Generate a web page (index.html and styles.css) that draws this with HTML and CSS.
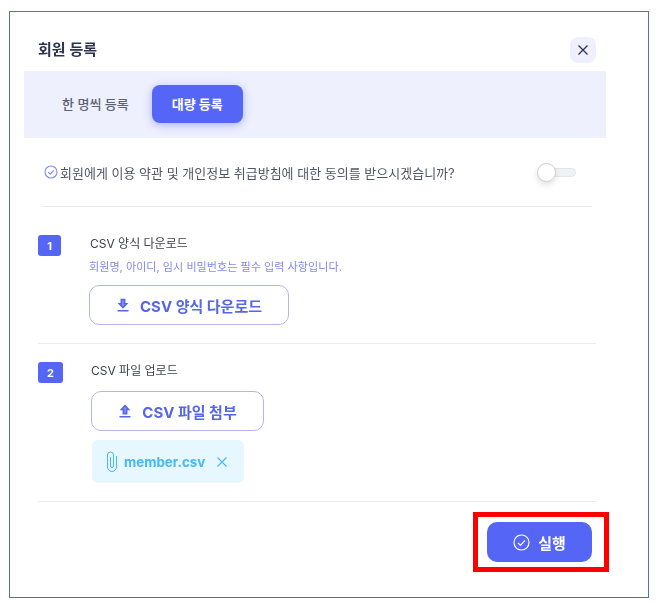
FILE: index.html
```html
<!DOCTYPE html>
<html lang="ko">
<head>
<meta charset="utf-8">
<title>회원 등록</title>
<link rel="stylesheet" href="styles.css">
</head>
<body>
<div class="frame">
  <header class="head">
    <h1 class="title">회원 등록</h1>
    <button class="close" aria-label="닫기">
      <svg width="12" height="12" viewBox="0 0 12 12"><path d="M1.500 1.500l9 9M10.500 1.500l-9 9" stroke="#2c3350" stroke-width="1.300" fill="none"/></svg>
    </button>
  </header>
  <nav class="tabs">
    <span class="tab">한 명씩 등록</span>
    <span class="tab-active">대량 등록</span>
  </nav>
  <div class="consent">
    <span class="consent-label">
      <svg class="consent-icon" width="14" height="14" viewBox="0 0 14 14"><circle cx="7" cy="7" r="6" fill="none" stroke="#7f8cf5" stroke-width="1.100"/><path d="M4.200 7.200l2 2 3.600-3.900" fill="none" stroke="#7f8cf5" stroke-width="1.100"/></svg>
      회원에게 이용 약관 및 개인정보 취급방침에 대한 동의를 받으시겠습니까?
    </span>
    <span class="switch"><span class="knob"></span></span>
  </div>
  <section class="step step-one">
    <span class="badge badge-one">1</span>
    <div class="step-body">
      <div class="step-title">CSV 양식 다운로드</div>
      <div class="step-note">회원명, 아이디, 임시 비밀번호는 필수 입력 사항입니다.</div>
      <button class="outline outline-one">
        <svg width="14" height="14" viewBox="0 0 14 14"><path d="M5.300 1.500h3.400v4.200h2L7 9.700 3.300 5.700h2zM1.500 12.700h11" fill="#7e8bf3" stroke="#5566e6" stroke-width="1.500"/></svg>
        CSV 양식 다운로드
      </button>
    </div>
  </section>
  <section class="step step-two">
    <span class="badge badge-two">2</span>
    <div class="step-body">
      <div class="step-title">CSV 파일 업로드</div>
      <button class="outline outline-two">
        <svg width="14" height="14" viewBox="0 0 14 14"><path d="M5.300 9.700V5.500h-2L7 1.500l3.700 4h-2v4.200zM1.500 12.700h11" fill="#7e8bf3" stroke="#5566e6" stroke-width="1.500"/></svg>
        CSV 파일 첨부
      </button>
      <div class="file">
        <svg width="12" height="21" viewBox="0 0 12 21"><path d="M10.500 5v11a4.500 4.500 0 0 1-9 0V4a3 3 0 0 1 6 0v11a1.500 1.500 0 0 1-3 0V6" fill="none" stroke="#45b8f5" stroke-width="1"/></svg>
        <span class="file-name">member.csv</span>
        <svg class="file-x" width="10" height="10" viewBox="0 0 10 10"><path d="M.5.500l9 9M9.500.500l-9 9" stroke="#45b8f5" stroke-width="1.100" fill="none"/></svg>
      </div>
    </div>
  </section>
  <footer class="foot">
    <div class="highlight">
      <button class="run">
        <svg width="17" height="17" viewBox="0 0 17 17"><circle cx="8.500" cy="8.500" r="7.500" fill="none" stroke="#fff" stroke-width="1.200"/><path d="M5 8.800l2.500 2.500 4.500-5" fill="none" stroke="#fff" stroke-width="1.200"/></svg>
        실행
      </button>
    </div>
  </footer>
</div>
</body>
</html>
```
FILE: styles.css
```css
* { box-sizing: border-box; }
html, body { margin: 0; padding: 0; background: #fff; }
body { font-family: Inter, "Noto Sans CJK KR", sans-serif; color: #3b4152; }
button { font-family: inherit; cursor: pointer; }

.frame {
  width: 640px;
  height: 587px;
  margin: 11px 0 0 9px;
  border: 1px solid #4f74a8;
  display: flex;
  flex-direction: column;
  filter: blur(.35px);
}
.head {
  height: 59px;
  padding: 25px 52px 0 28px;
  display: flex;
  justify-content: space-between;
  align-items: flex-start;
}
.title { margin: 3px 0 0; font-size: 15px; line-height: 20px; font-weight: 600; color: #2c3350; }
.close {
  width: 26px;
  height: 26px;
  border: 0;
  border-radius: 8px;
  background: #eef0fd;
  padding: 0;
  display: flex;
  align-items: center;
  justify-content: center;
}
.tabs {
  width: 582px;
  height: 67px;
  margin-left: 14px;
  padding: 0 0 2px 38px;
  background: #eef0fd;
  display: flex;
  align-items: center;
  gap: 23px;
  font-size: 13px;
}
.tab { color: #5c6270; font-weight: 500; }
.tab-active {
  width: 91px;
  height: 38px;
  border-radius: 8px;
  background: #5566f6;
  color: #fff;
  font-weight: 700;
  display: flex;
  align-items: center;
  justify-content: center;
  box-shadow: 0 2px 8px rgba(85, 102, 246, .45);
}
.consent {
  width: 550px;
  height: 69px;
  margin-left: 32px;
  border-bottom: 1px solid #ebecef;
  display: flex;
  align-items: center;
  justify-content: space-between;
  padding-right: 16px;
}
.consent-label { display: flex; align-items: center; gap: 2px; font-size: 13px; color: #50566a; }
.consent-icon { margin-left: 2px; }
.switch {
  position: relative;
  width: 38px;
  height: 9px;
  border: 1px solid #e2e4ea;
  border-radius: 5px;
  background: #f1f2f5;
}
.knob {
  position: absolute;
  left: -2px;
  top: -6px;
  width: 19px;
  height: 19px;
  border-radius: 50%;
  background: #fff;
  border: 1px solid #cfd1d8;
  box-shadow: 0 3px 6px rgba(0, 0, 0, .12);
}
.step {
  width: 558px;
  margin-left: 28px;
  display: flex;
  align-items: flex-start;
  border-bottom: 1px solid #ebecef;
}
.step-one { height: 137px; padding-top: 28px; }
.step-two { height: 158px; padding-top: 18px; }
.badge {
  height: 21px;
  border-radius: 3px;
  background: #5566f6;
  color: #fff;
  font-size: 11px;
  font-weight: 700;
  display: flex;
  align-items: center;
  justify-content: center;
}
.badge-one { width: 23px; margin-right: 28px; }
.badge-two { width: 25px; margin-right: 28px; }
.step-body { display: flex; flex-direction: column; align-items: flex-start; }
.step-title { margin: 1px 0 0 1px; font-size: 12px; line-height: 16px; color: #3b4152; }
.step-two .step-title { margin-left: 0; }
.step-note { margin-top: 8px; font-size: 11.100px; line-height: 14px; color: #8289ee; }
.outline {
  height: 40px;
  border: 1px solid #b3b6ee;
  border-radius: 10px;
  background: #fff;
  color: #5566e6;
  font-size: 15px;
  font-weight: 700;
  display: flex;
  align-items: center;
  justify-content: center;
  gap: 10px;
}
.outline-one { width: 200px; margin-top: 11px; }
.outline-two { width: 173px; margin-top: 12px; }
.file {
  width: 152px;
  height: 43px;
  margin: 9px 0 0 1px;
  padding-left: 14px;
  border-radius: 6px;
  background: #e6f7ff;
  display: flex;
  align-items: center;
  gap: 6px;
}
.file-name { font-size: 13.400px; font-weight: 700; color: #45b8f5; }
.file-x { margin-left: 6px; }
.foot {
  display: flex;
  justify-content: flex-end;
  padding: 10px 39px 0 0;
}
.highlight {
  width: 136px;
  height: 60px;
  border: 5px solid #f00;
  padding-left: 9px;
  display: flex;
  align-items: center;
}
.run {
  width: 105px;
  height: 40px;
  border: 0;
  border-radius: 10px;
  background: #5566f6;
  color: #fff;
  font-size: 15px;
  font-weight: 700;
  display: flex;
  align-items: center;
  justify-content: center;
  gap: 8px;
}
```
